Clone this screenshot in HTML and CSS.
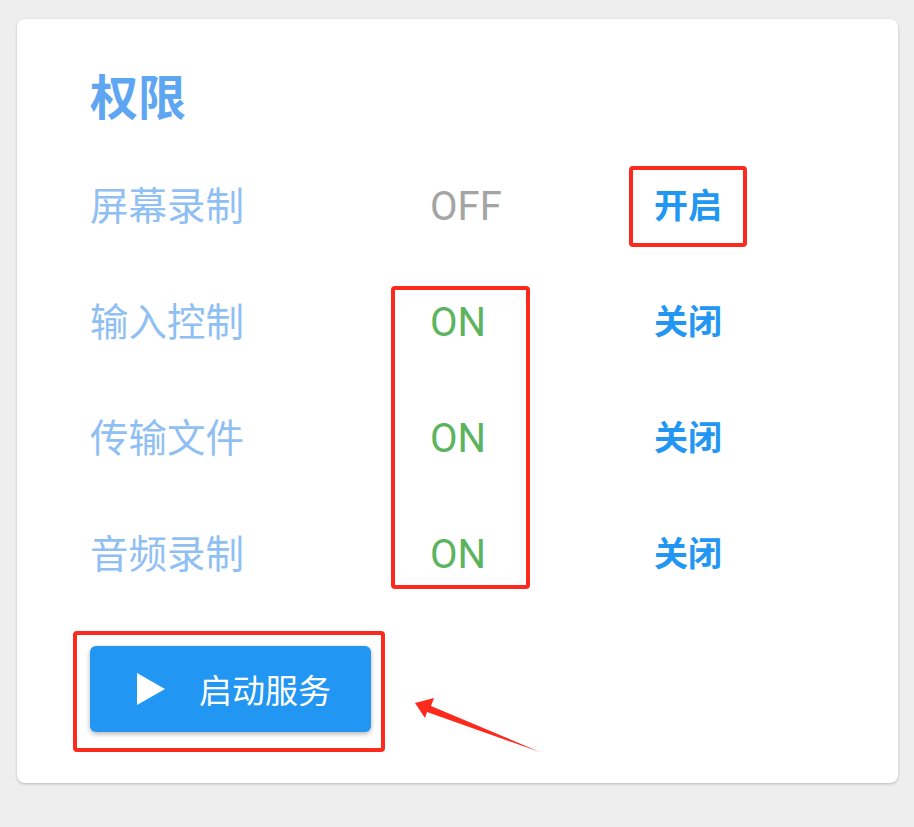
FILE: index.html
```html
<!DOCTYPE html>
<html lang="zh-CN">
<head>
<meta charset="utf-8">
<title>权限</title>
<link rel="stylesheet" href="styles.css">
</head>
<body>
<div class="card">
  <h1 class="title">权限</h1>
  <div class="grid">
    <div class="label">屏幕录制</div>
    <div class="state off">OFF</div>
    <div class="action">开启</div>

    <div class="label">输入控制</div>
    <div class="state on">ON</div>
    <div class="action">关闭</div>

    <div class="label">传输文件</div>
    <div class="state on">ON</div>
    <div class="action">关闭</div>

    <div class="label">音频录制</div>
    <div class="state on">ON</div>
    <div class="action">关闭</div>
  </div>
  <button class="start-btn">
    <svg class="play" width="28" height="32" viewBox="0 0 28 32"><polygon points="0,0 28,16 0,32" fill="#ffffff"/></svg>
    <span>启动服务</span>
  </button>
</div>

<div class="mark mark-open"></div>
<div class="mark mark-on"></div>
<div class="mark mark-btn"></div>
<svg class="arrow" width="914" height="827" viewBox="0 0 914 827">
  <polygon points="415,703 434,698 431,706 540,752 427,712 425,718" fill="#fb2a1c"/>
</svg>
</body>
</html>
```

FILE: styles.css
```css
html, body {
  margin: 0;
  padding: 0;
}
body {
  background: #eeeeee;
  width: 914px;
  height: 827px;
  position: relative;
  overflow: hidden;
  font-family: Roboto, "Noto Sans CJK SC", sans-serif;
}
.card {
  box-sizing: border-box;
  margin: 19px 0 0 17px;
  width: 881px;
  height: 764px;
  background: #ffffff;
  border-radius: 8px;
  box-shadow: 0 1px 3px rgba(0, 0, 0, 0.22);
  padding: 52px 0 0 73px;
}
.title {
  margin: 0;
  font-size: 48px;
  line-height: 56px;
  font-weight: 700;
  color: #5ea5f2;
}
.grid {
  margin-top: 21px;
  display: grid;
  grid-template-columns: 340px 199px 118px;
  grid-auto-rows: 116px;
  align-items: center;
}
.label {
  font-size: 38.5px;
  color: #90bff4;
  padding-bottom: 6px;
}
.state {
  font-size: 40px;
}
.off { color: #a4a4a4; }
.on { color: #5cb45f; }
.action {
  text-align: center;
  font-size: 34px;
  font-weight: 700;
  color: #2196f3;
  padding-bottom: 6px;
}
.start-btn {
  margin: 34px 0 0 0;
  width: 281px;
  height: 86px;
  border: none;
  border-radius: 6px;
  background: #2196f3;
  box-shadow: 0 2px 5px rgba(0, 0, 0, 0.3);
  display: flex;
  align-items: center;
  padding: 0 0 0 47px;
  gap: 34px;
  color: #ffffff;
  font-family: Roboto, "Noto Sans CJK SC", sans-serif;
  font-size: 33px;
  font-weight: 400;
}
.mark {
  position: absolute;
  box-sizing: border-box;
  border: 4px solid #fb2a1c;
  border-radius: 4px;
}
.mark-open { left: 629px; top: 166px; width: 118px; height: 81px; }
.mark-on { left: 391px; top: 286px; width: 139px; height: 303px; }
.mark-btn { left: 73px; top: 631px; width: 312px; height: 121px; }
.arrow {
  position: absolute;
  left: 0;
  top: 0;
}
```
